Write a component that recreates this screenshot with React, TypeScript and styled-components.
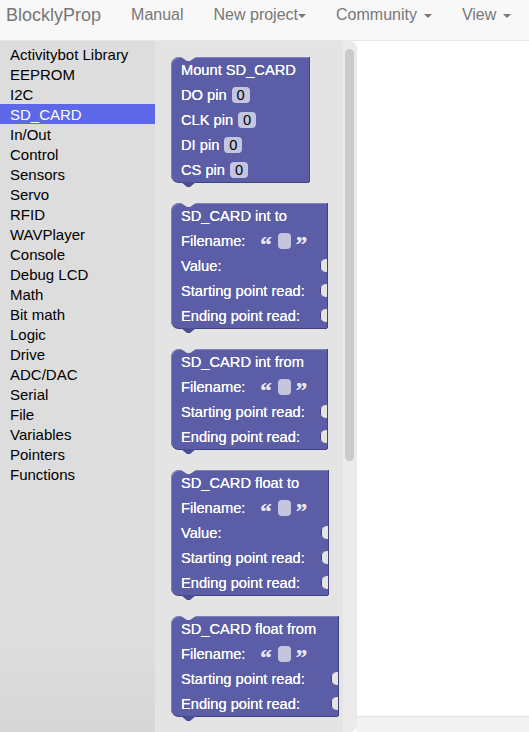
import styled, { createGlobalStyle } from 'styled-components'

const GlobalStyle = createGlobalStyle`
	html, body {
		margin: 0;
		padding: 0;
		background: #fff;
		font-family: 'Liberation Sans', Arial, Helvetica, sans-serif;
	}
	* {
		box-sizing: border-box;
	}
`

type Row = { label: string; field?: 'num' | 'text'; input?: boolean }
type BlockDef = { title: string; width: number; rows: Row[] }

const categories = [
	'Activitybot Library',
	'EEPROM',
	'I2C',
	'SD_CARD',
	'In/Out',
	'Control',
	'Sensors',
	'Servo',
	'RFID',
	'WAVPlayer',
	'Console',
	'Debug LCD',
	'Math',
	'Bit math',
	'Logic',
	'Drive',
	'ADC/DAC',
	'Serial',
	'File',
	'Variables',
	'Pointers',
	'Functions',
]

const blocks: BlockDef[] = [
	{
		title: 'Mount SD_CARD',
		width: 138,
		rows: [
			{ label: 'DO pin', field: 'num' },
			{ label: 'CLK pin', field: 'num' },
			{ label: 'DI pin', field: 'num' },
			{ label: 'CS pin', field: 'num' },
		],
	},
	{
		title: 'SD_CARD int to',
		width: 156,
		rows: [
			{ label: 'Filename:', field: 'text' },
			{ label: 'Value:', input: true },
			{ label: 'Starting point read:', input: true },
			{ label: 'Ending point read:', input: true },
		],
	},
	{
		title: 'SD_CARD int from',
		width: 156,
		rows: [
			{ label: 'Filename:', field: 'text' },
			{ label: 'Starting point read:', input: true },
			{ label: 'Ending point read:', input: true },
		],
	},
	{
		title: 'SD_CARD float to',
		width: 157,
		rows: [
			{ label: 'Filename:', field: 'text' },
			{ label: 'Value:', input: true },
			{ label: 'Starting point read:', input: true },
			{ label: 'Ending point read:', input: true },
		],
	},
	{
		title: 'SD_CARD float from',
		width: 167,
		rows: [
			{ label: 'Filename:', field: 'text' },
			{ label: 'Starting point read:', input: true },
			{ label: 'Ending point read:', input: true },
		],
	},
]

export default function App() {
	return (
		<>
			<GlobalStyle />
			<Page>
				<Navbar>
					<Brand>BlocklyProp</Brand>
					<NavItem>Manual</NavItem>
					<NavItem>
						New project
						<Caret />
					</NavItem>
					<NavItem>
						Community
						<Caret $spaced />
					</NavItem>
					<NavItem>
						View
						<Caret $spaced />
					</NavItem>
				</Navbar>
				<Main>
					<Toolbox>
						{categories.map((c) => (
							<Category key={c} $selected={c === 'SD_CARD'}>
								{c}
							</Category>
						))}
					</Toolbox>
					<Flyout>
						<BlockList>
							{blocks.map((b) => (
								<Block key={b.title} $width={b.width}>
									<BlockRow>{b.title}</BlockRow>
									{b.rows.map((r) => (
										<BlockRow key={r.label}>
											{r.label}
											{r.field === 'num' && <NumField>0</NumField>}
											{r.field === 'text' && (
												<>
													<Quote $first>“</Quote>
													<TextField />
													<Quote>”</Quote>
												</>
											)}
											{r.input && <InputNotch />}
										</BlockRow>
									))}
								</Block>
							))}
						</BlockList>
						<ScrollTrack>
							<ScrollThumb />
						</ScrollTrack>
					</Flyout>
					<Workspace>
						<Canvas />
						<HScroll />
					</Workspace>
				</Main>
			</Page>
		</>
	)
}

const Page = styled.div`
	height: 100vh;
	display: flex;
	flex-direction: column;
	overflow: hidden;
`

const Navbar = styled.nav`
	height: 41px;
	flex-shrink: 0;
	display: flex;
	align-items: flex-start;
	background: #f8f8f8;
	border-bottom: 1px solid #e7e7e7;
	color: #777;
`

const Brand = styled.div`
	font-size: 18px;
	line-height: 30px;
	padding: 0 15px 0 6px;
`

const NavItem = styled.div`
	font-size: 16px;
	line-height: 30px;
	padding: 0 15px;
	white-space: nowrap;
`

const Caret = styled.span<{ $spaced?: boolean }>`
	display: inline-block;
	width: 0;
	height: 0;
	margin-left: ${(p) => (p.$spaced ? '7px' : '0')};
	vertical-align: middle;
	border-top: 4px solid #777;
	border-left: 4px solid transparent;
	border-right: 4px solid transparent;
`

const Main = styled.div`
	flex: 1;
	display: flex;
	min-height: 0;
`

const Toolbox = styled.div`
	width: 155px;
	flex-shrink: 0;
	padding-top: 3px;
	background: linear-gradient(to bottom, #dddddd 88%, #d6d6d6);
`

const Category = styled.div<{ $selected?: boolean }>`
	height: 20px;
	line-height: 22px;
	padding-left: 10px;
	font-size: 15px;
	white-space: nowrap;
	color: ${(p) => (p.$selected ? '#fff' : '#000')};
	background: ${(p) => (p.$selected ? '#5d68e9' : 'transparent')};
`

const Flyout = styled.div`
	width: 202px;
	flex-shrink: 0;
	display: flex;
	background: #e4e4e4;
	border-radius: 0 8px 8px 0;
	overflow: hidden;
`

const BlockList = styled.div`
	width: 188px;
	display: flex;
	flex-direction: column;
	align-items: flex-start;
	gap: 21px;
	padding: 16px 0 0 16px;
`

const Block = styled.div<{ $width: number }>`
	position: relative;
	flex-shrink: 0;
	width: ${(p) => p.$width}px;
	display: flex;
	flex-direction: column;
	background: #5b5ea6;
	border-radius: 8px 0 0 8px;
	box-shadow: inset 1px 1px 0 rgba(255, 255, 255, 0.22), 0 1px 0 #40427c, 1px 0 0 #40427c;
	color: #fff;
	font-size: 11pt;

	&::before {
		content: '';
		position: absolute;
		top: 0;
		left: 10px;
		width: 15px;
		height: 4px;
		background: #e4e4e4;
		clip-path: polygon(0 0, 100% 0, 60% 100%, 40% 100%);
	}

	&::after {
		content: '';
		position: absolute;
		bottom: -5px;
		left: 10px;
		width: 15px;
		height: 5px;
		background: #4a4d8f;
		clip-path: polygon(0 0, 100% 0, 60% 100%, 40% 100%);
	}
`

const BlockRow = styled.div`
	position: relative;
	height: 25px;
	display: flex;
	align-items: center;
	padding-left: 10px;
	white-space: nowrap;
	text-shadow: 0 0 0.4px #fff;
`

const NumField = styled.span`
	display: inline-flex;
	align-items: center;
	justify-content: center;
	width: 18px;
	height: 16px;
	margin-left: 5px;
	border-radius: 4px;
	background: #c4c5df;
	color: #000;
	font-size: 11pt;
	text-shadow: none;
`

const TextField = styled.span`
	display: inline-block;
	width: 13px;
	height: 16px;
	margin: 0 5px 0 6px;
	border-radius: 4px;
	background: #c4c5df;
`

const Quote = styled.span<{ $first?: boolean }>`
	margin-left: ${(p) => (p.$first ? '15px' : '0')};
	font-family: 'Liberation Serif', 'Times New Roman', serif;
	font-weight: bold;
	font-size: 23px;
	line-height: 1;
	padding-top: 8px;
	color: #e6e4ee;
`

const InputNotch = styled.span`
	position: absolute;
	right: 0;
	top: 6px;
	width: 7px;
	height: 13px;
	background: #e4e4e4;
	border-radius: 5px 0 0 5px / 4px 0 0 4px;
	box-shadow: inset 1px 0 0 #40427c;
`

const ScrollTrack = styled.div`
	width: 14px;
	padding: 8px 3px 0 2px;
	background: #ebebeb;
`

const ScrollThumb = styled.div`
	height: 412px;
	border-radius: 5px;
	background: #cbcbcb;
`

const Workspace = styled.div`
	flex: 1;
	display: flex;
	flex-direction: column;
	background: #fff;
`

const Canvas = styled.div`
	flex: 1;
`

const HScroll = styled.div`
	height: 16px;
	background: #f2f2f2;
	border-top: 1px solid #e3e3e3;
`
